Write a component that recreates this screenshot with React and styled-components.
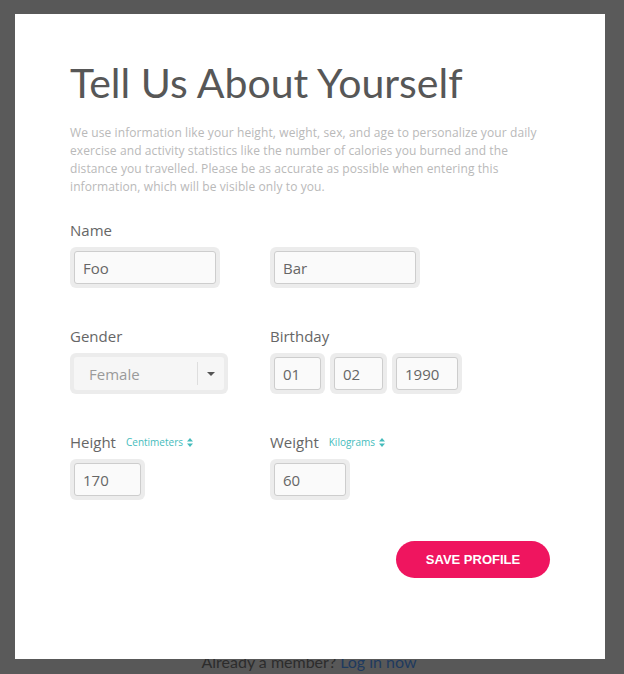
import React from 'react';
import styled, { createGlobalStyle } from 'styled-components';

const Global = createGlobalStyle`
  html, body {
    margin: 0;
    padding: 0;
    background: #5a5a5a;
    font-family: "Open Sans", Lato, sans-serif;
  }
`;

const Page = styled.div`
  margin: 0 34px 0 30px;
  min-height: 674px;
  background: #585858;
  display: flex;
  flex-direction: column;
  justify-content: flex-end;
  align-items: center;
`;

const Footer = styled.div`
  font-family: Lato, sans-serif;
  font-size: 16px;
  color: #2c2c2c;
  padding-bottom: 3px;
  margin-left: -2px;

  a {
    color: #1e3a5f;
    text-decoration: none;
  }
`;

const Overlay = styled.div`
  position: fixed;
  inset: 0;
  padding: 14px 19px 15px 15px;
`;

const Modal = styled.div`
  background: #fff;
  height: 645px;
  box-sizing: border-box;
  padding: 46px 55px 0;
`;

const Title = styled.h1`
  margin: 0;
  font-family: Lato, sans-serif;
  font-size: 41px;
  font-weight: 400;
  line-height: 46px;
  color: #575757;
`;

const Intro = styled.p`
  margin: 18px 0 0;
  max-width: 480px;
  font-size: 12px;
  letter-spacing: 0.1px;
  line-height: 18px;
  color: #b9b9b9;
`;

const Grid = styled.div`
  display: grid;
  grid-template-columns: 200px 200px;
  row-gap: 38px;
  margin-top: 24px;
`;

const Field = styled.div`
  display: flex;
  flex-direction: column;
  gap: 7px;
`;

const Label = styled.div`
  display: flex;
  align-items: center;
  gap: 10px;
  font-size: 15px;
  line-height: 20px;
  color: #666;
`;

const Unit = styled.span`
  display: inline-flex;
  align-items: center;
  gap: 4px;
  font-size: 10px;
  color: #45bcbc;
`;

const Boxes = styled.div`
  display: flex;
  gap: 5px;
`;

const Ring = styled.div`
  box-sizing: border-box;
  width: ${p => p.w}px;
  height: 41px;
  padding: 4px;
  background: #ececec;
  border-radius: 6px;
`;

const Input = styled.div`
  box-sizing: border-box;
  height: 100%;
  background: #fafafa;
  border: 1px solid #cdcdcd;
  border-radius: 3px;
  padding-left: 8px;
  display: flex;
  align-items: center;
  font-size: 15px;
  color: #666;
`;

const Select = styled.div`
  box-sizing: border-box;
  height: 100%;
  background: #f6f6f6;
  border-radius: 3px;
  display: flex;
  align-items: center;
  font-size: 15px;
  color: #9a9a9a;
`;

const SelectText = styled.span`
  flex: 1;
  padding-left: 15px;
`;

const Caret = styled.span`
  width: 26px;
  height: 23px;
  border-left: 1px solid #dedede;
  display: flex;
  align-items: center;
  justify-content: center;
`;

const Actions = styled.div`
  display: flex;
  justify-content: flex-end;
  margin-top: 41px;
`;

const Button = styled.button`
  width: 154px;
  height: 37px;
  border: none;
  border-radius: 19px;
  background: #ef155f;
  color: #fff;
  font-family: "Liberation Sans", Arial, sans-serif;
  font-weight: bold;
  font-size: 13px;
  cursor: pointer;
`;

const Sort = () => (
  <svg width="6" height="9" viewBox="0 0 6 9">
    <path d="M0 3.5 L3 0 L6 3.5 Z M0 5.5 L3 9 L6 5.5 Z" fill="#45bcbc" />
  </svg>
);

function TextBox({ w, children }) {
  return (
    <Ring w={w}>
      <Input>{children}</Input>
    </Ring>
  );
}

export default function App() {
  return (
    <>
      <Global />
      <Page>
        <Footer>
          Already a member? <a href="#">Log in now</a>
        </Footer>
      </Page>
      <Overlay>
        <Modal>
          <Title>Tell Us About Yourself</Title>
          <Intro>
            We use information like your height, weight, sex, and age to personalize your daily
            exercise and activity statistics like the number of calories you burned and the
            distance you travelled. Please be as accurate as possible when entering this
            information, which will be visible only to you.
          </Intro>
          <Grid>
            <Field>
              <Label>Name</Label>
              <TextBox w={150}>Foo</TextBox>
            </Field>
            <Field>
              <Label>&nbsp;</Label>
              <TextBox w={150}>Bar</TextBox>
            </Field>

            <Field>
              <Label>Gender</Label>
              <Ring w={158}>
                <Select>
                  <SelectText>Female</SelectText>
                  <Caret>
                    <svg width="8" height="4" viewBox="0 0 8 4">
                      <path d="M0 0 L8 0 L4 4 Z" fill="#555" />
                    </svg>
                  </Caret>
                </Select>
              </Ring>
            </Field>
            <Field>
              <Label>Birthday</Label>
              <Boxes>
                <TextBox w={55}>01</TextBox>
                <TextBox w={57}>02</TextBox>
                <TextBox w={70}>1990</TextBox>
              </Boxes>
            </Field>

            <Field>
              <Label>
                Height
                <Unit>Centimeters <Sort /></Unit>
              </Label>
              <TextBox w={75}>170</TextBox>
            </Field>
            <Field>
              <Label>
                Weight
                <Unit>Kilograms <Sort /></Unit>
              </Label>
              <TextBox w={80}>60</TextBox>
            </Field>
          </Grid>
          <Actions>
            <Button>SAVE PROFILE</Button>
          </Actions>
        </Modal>
      </Overlay>
    </>
  );
}
